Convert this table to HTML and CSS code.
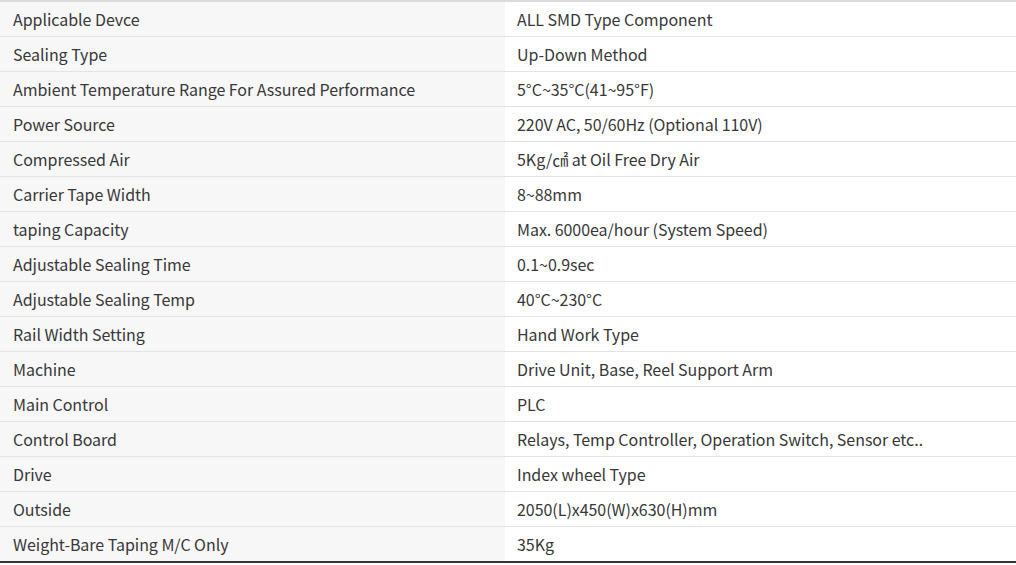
FILE: index.html
```html
<!DOCTYPE html>
<html>
<head>
<meta charset="utf-8">
<link rel="stylesheet" href="styles.css">
</head>
<body>
<table class="spec">
<tbody>
<tr><th>Applicable Devce</th><td>ALL SMD Type Component</td></tr>
<tr><th>Sealing Type</th><td>Up-Down Method</td></tr>
<tr><th>Ambient Temperature Range For Assured Performance</th><td>5°C~35°C(41~95°F)</td></tr>
<tr><th>Power Source</th><td>220V AC, 50/60Hz (Optional 110V)</td></tr>
<tr><th>Compressed Air</th><td>5Kg/㎠ at Oil Free Dry Air</td></tr>
<tr><th>Carrier Tape Width</th><td>8~88mm</td></tr>
<tr><th>taping Capacity</th><td>Max. 6000ea/hour (System Speed)</td></tr>
<tr><th>Adjustable Sealing Time</th><td>0.1~0.9sec</td></tr>
<tr><th>Adjustable Sealing Temp</th><td>40°C~230°C</td></tr>
<tr><th>Rail Width Setting</th><td>Hand Work Type</td></tr>
<tr><th>Machine</th><td>Drive Unit, Base, Reel Support Arm</td></tr>
<tr><th>Main Control</th><td>PLC</td></tr>
<tr><th>Control Board</th><td>Relays, Temp Controller, Operation Switch, Sensor etc..</td></tr>
<tr><th>Drive</th><td>Index wheel Type</td></tr>
<tr><th>Outside</th><td>2050(L)x450(W)x630(H)mm</td></tr>
<tr><th>Weight-Bare Taping M/C Only</th><td>35Kg</td></tr>
</tbody>
</table>
</body>
</html>
```
FILE: styles.css
```css
html, body {
  margin: 0;
  padding: 0;
  background: #fff;
}
.spec {
  width: 1016px;
  border-collapse: collapse;
  border-top: 2px solid #dcdcdc;
  border-bottom: 2px solid #333;
  font-family: "Noto Sans CJK KR", "Noto Sans", sans-serif;
  font-size: 16px;
  letter-spacing: -0.04px;
  color: #383838;
  table-layout: fixed;
}
.spec th, .spec td {
  height: 34px;
  padding: 0 12px;
  text-align: left;
  font-weight: 400;
  border-bottom: 1px solid #e3e3e3;
  vertical-align: middle;
  line-height: 20px;
  white-space: nowrap;
}
.spec th {
  width: 480px;
  padding-left: 13px;
  background: #f7f7f7;
}
.spec tr:last-child th, .spec tr:last-child td {
  border-bottom: none;
}
```
